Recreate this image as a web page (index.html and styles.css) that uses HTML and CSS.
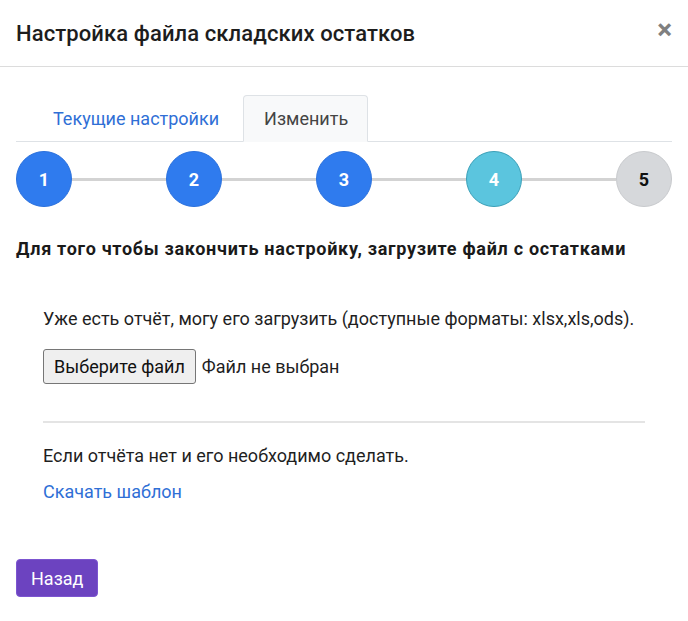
FILE: index.html
```html
<!DOCTYPE html>
<html lang="ru">
<head>
<meta charset="utf-8">
<link rel="stylesheet" href="styles.css">
</head>
<body>
<div class="modal">
  <div class="modal-header">
    <h1 class="modal-title">Настройка файла складских остатков</h1>
    <span class="close">&times;</span>
  </div>
  <div class="modal-body">
    <ul class="tabs">
      <li class="tab"><a class="tab-link">Текущие настройки</a></li>
      <li class="tab active"><a class="tab-link">Изменить</a></li>
    </ul>
    <div class="steps">
      <div class="step done">1</div>
      <div class="line"></div>
      <div class="step done">2</div>
      <div class="line"></div>
      <div class="step done">3</div>
      <div class="line"></div>
      <div class="step current">4</div>
      <div class="line"></div>
      <div class="step todo">5</div>
    </div>
    <h2 class="lead">Для того чтобы закончить настройку, загрузите файл с остатками</h2>
    <div class="section">
      <p class="text">Уже есть отчёт, могу его загрузить (доступные форматы: xlsx,xls,ods).</p>
      <div class="file">
        <button class="file-btn" type="button">Выберите файл</button>
        <span class="file-name">Файл не выбран</span>
      </div>
      <hr class="divider">
      <p class="text">Если отчёта нет и его необходимо сделать.</p>
      <a class="link">Скачать шаблон</a>
    </div>
    <button class="back" type="button">Назад</button>
  </div>
</div>
</body>
</html>
```
FILE: styles.css
```css
* { box-sizing: border-box; }
html, body { margin: 0; padding: 0; background: #fff; }
body {
  font-family: Roboto, "Liberation Sans", Arial, sans-serif;
  color: #212529;
  width: 688px;
  height: 621px;
  overflow: hidden;
}
.modal-header {
  display: flex;
  align-items: center;
  justify-content: space-between;
  height: 67px;
  padding: 0 16px;
  border-bottom: 1px solid #dcdcdc;
}
.modal-title {
  margin: 0;
  font-size: 22px;
  font-weight: 500;
  letter-spacing: 0.1px;
  color: #1d1d1d;
}
.close {
  font-size: 28px;
  font-weight: 700;
  color: #808080;
  line-height: 1;
  margin-top: -6px;
}
.modal-body {
  padding: 28px 16px 0;
}
.tabs {
  list-style: none;
  margin: 0;
  padding: 0 0 0 16px;
  display: flex;
  gap: 4px;
  border-bottom: 1px solid #dee2e6;
}
.tab { margin-bottom: -1px; }
.tab-link {
  display: block;
  height: 47px;
  line-height: 45px;
  padding: 0 19px 0 20px;
  font-size: 18px;
  color: #2f6fd6;
  border: 1px solid transparent;
  border-radius: 4px 4px 0 0;
}
.tab.active .tab-link {
  color: #444;
  background: #f8f9fa;
  border-color: #dee2e6 #dee2e6 #f8f9fa;
}
.steps {
  display: flex;
  align-items: center;
  margin-top: 9px;
}
.step {
  width: 56px;
  height: 56px;
  flex: none;
  border-radius: 50%;
  display: flex;
  align-items: center;
  justify-content: center;
  font-size: 18px;
  font-weight: 700;
  color: #fff;
}
.step.done { background: #2f7bee; border: 1px solid #2a70dc; }
.step.current { background: #5bc5de; border: 1px solid #3a9fb7; }
.step.todo { background: #d6d8db; border: 1px solid #c8cacd; color: #111; }
.line {
  flex: 1;
  height: 3px;
  background: #d3d3d3;
}
.lead {
  margin: 31px 0 0;
  font-size: 18px;
  font-weight: 700;
  letter-spacing: 0.7px;
  color: #1a1a1a;
}
.section {
  padding: 0 27px;
  margin-top: 49px;
}
.text {
  margin: 0;
  font-size: 18px;
  color: #1f1f1f;
}
.file {
  display: flex;
  align-items: center;
  margin-top: 20px;
}
.file-btn {
  font-family: inherit;
  font-size: 18px;
  color: #111;
  background: #efefef;
  border: 1px solid #767676;
  border-radius: 3px;
  height: 35px;
  padding: 0 10px;
  margin-right: 6px;
}
.file-name { font-size: 18px; color: #1f1f1f; }
.divider {
  border: 0;
  border-top: 2px solid #e4e4e4;
  margin: 37px 0 22px;
}
.link {
  display: block;
  margin-top: 15px;
  font-size: 18px;
  color: #2f6fd6;
}
.back {
  margin-top: 57px;
  font-family: inherit;
  font-size: 18px;
  color: #fff;
  background: #6c43c0;
  border: 1px solid #7c55d0;
  border-radius: 4px;
  height: 38px;
  padding: 0 14px;
}
```
